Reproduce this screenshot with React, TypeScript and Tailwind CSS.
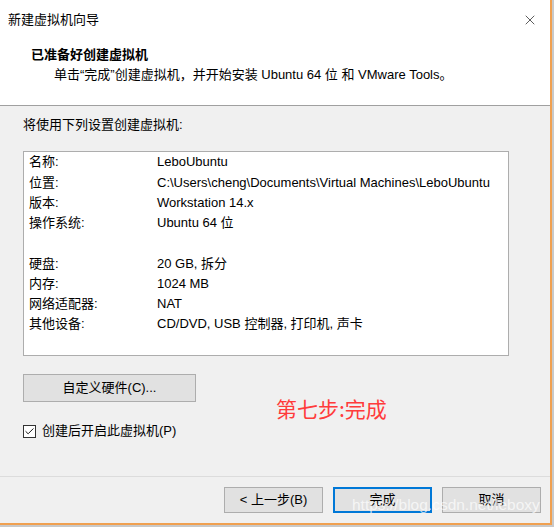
import { Check, X } from 'lucide-react';

const font = { fontFamily: '"Liberation Sans", "Noto Sans CJK SC", sans-serif' };

const rows: [string, string][] = [
  ['名称:', 'LeboUbuntu'],
  ['位置:', 'C:\\Users\\cheng\\Documents\\Virtual Machines\\LeboUbuntu'],
  ['版本:', 'Workstation 14.x'],
  ['操作系统:', 'Ubuntu 64 位'],
  ['', ''],
  ['硬盘:', '20 GB, 拆分'],
  ['内存:', '1024 MB'],
  ['网络适配器:', 'NAT'],
  ['其他设备:', 'CD/DVD, USB 控制器, 打印机, 声卡'],
];

export default function App() {
  return (
    <div className="w-[554px] h-[527px] bg-[#c9c9c9] overflow-hidden" style={font}>
      <div className="relative w-[552px] h-[525px] flex flex-col bg-[#f0f0f0] border-r-2 border-b-2 border-[#f0a050] text-[13px] text-black">
        {/* header */}
        <div className="h-[106px] bg-white border-b border-[#a0a0a0] flex flex-col">
          <div className="h-[40px] flex items-center justify-between pl-[8px] pr-[12px]">
            <span className="text-[13px]">新建虚拟机向导</span>
            <X className="w-[16px] h-[16px] text-[#333]" strokeWidth={1.2} />
          </div>
          <div className="pl-[31px] mt-[6px] font-bold text-[13px] leading-[18px]">已准备好创建虚拟机</div>
          <div className="pl-[54px] mt-[2px] text-[13px] leading-[18px] whitespace-nowrap">
            单击“完成”创建虚拟机，并开始安装 Ubuntu 64 位 和 VMware Tools。
          </div>
        </div>

        {/* body */}
        <div className="flex-1 flex flex-col px-[23px]">
          <div className="mt-[10px] leading-[18px]">将使用下列设置创建虚拟机:</div>
          <div className="mt-[17px] w-[486px] h-[205px] bg-white border border-[#adadad] pl-[5px]">
            {rows.map(([k, v], i) => (
              <div key={i} className="flex h-[20.25px] items-center whitespace-nowrap">
                <span className="w-[128px]">{k}</span>
                <span>{v}</span>
              </div>
            ))}
          </div>
          <button className="mt-[18px] w-[173px] h-[28px] bg-[#e1e1e1] border border-[#adadad] text-[13px]">
            自定义硬件(C)...
          </button>
          <label className="mt-[21px] flex items-center gap-[6px] leading-[16px]">
            <span className="w-[13px] h-[13px] border border-[#333] bg-white flex items-center justify-center">
              <Check className="w-[11px] h-[11px]" strokeWidth={2} />
            </span>
            创建后开启此虚拟机(P)
          </label>
        </div>

        {/* footer */}
        <div className="h-[47px] border-t border-[#dcdcdc] flex items-start justify-end gap-[10px] pr-[9px] pt-[10px]">
          <button className="w-[99px] h-[26px] bg-[#e1e1e1] border border-[#adadad]">&lt; 上一步(B)</button>
          <button className="w-[99px] h-[26px] bg-[#e1e1e1] border-2 border-[#0078d7]">完成</button>
          <button className="w-[99px] h-[26px] bg-[#e1e1e1] border border-[#adadad]">取消</button>
        </div>

        {/* annotation overlay */}
        <div
          className="absolute left-[276px] top-[394px] text-[21px] leading-[28px] text-[#ff3b3b]"
          style={{ fontFamily: '"Noto Sans CJK SC", sans-serif' }}
        >
          第七步:完成
        </div>
        {/* watermark */}
        <div className="absolute left-[352px] top-[495px] text-[15.5px] leading-[20px] text-white/70 whitespace-nowrap">
          https://blog.csdn.net/leboxy
        </div>
      </div>
    </div>
  );
}
